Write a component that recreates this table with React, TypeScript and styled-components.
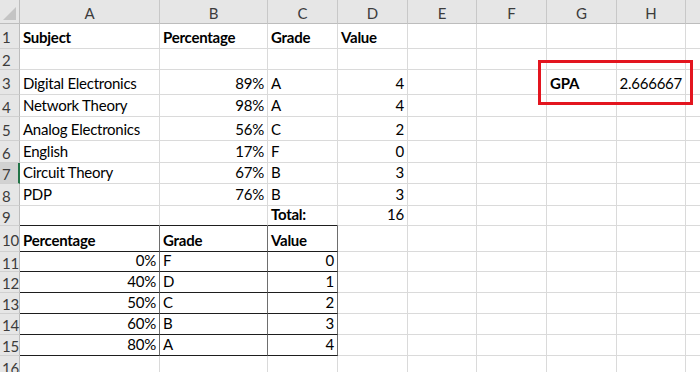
import React from 'react';
import styled, { createGlobalStyle } from 'styled-components';

const GlobalStyle = createGlobalStyle`
  html, body {
    margin: 0;
    padding: 0;
    background: #ffffff;
  }
  body {
    font-family: Lato, "Liberation Sans", sans-serif;
    overflow: hidden;
  }
`;

const COLS = ['A', 'B', 'C', 'D', 'E', 'F', 'G', 'H', 'I'];
const COL_WIDTHS = [140, 108, 70, 70, 69, 70, 70, 69, 90];
const ROW_HEIGHTS = [25, 21, 25, 22, 24, 22, 21, 22, 20, 26, 20, 21, 21, 21, 21, 22];
const ACTIVE_ROW = 7;

type CellData = { v: string; bold?: boolean; right?: boolean };

const b = (v: string): CellData => ({ v, bold: true });
const l = (v: string): CellData => ({ v });
const r = (v: string): CellData => ({ v, right: true });

const DATA: Record<string, CellData> = {
  A1: b('Subject'), B1: b('Percentage'), C1: b('Grade'), D1: b('Value'),
  A3: l('Digital Electronics'), B3: r('89%'), C3: l('A'), D3: r('4'),
  A4: l('Network Theory'), B4: r('98%'), C4: l('A'), D4: r('4'),
  A5: l('Analog Electronics'), B5: r('56%'), C5: l('C'), D5: r('2'),
  A6: l('English'), B6: r('17%'), C6: l('F'), D6: r('0'),
  A7: l('Circuit Theory'), B7: r('67%'), C7: l('B'), D7: r('3'),
  A8: l('PDP'), B8: r('76%'), C8: l('B'), D8: r('3'),
  C9: b('Total:'), D9: r('16'),
  A10: b('Percentage'), B10: b('Grade'), C10: b('Value'),
  A11: r('0%'), B11: l('F'), C11: r('0'),
  A12: r('40%'), B12: l('D'), C12: r('1'),
  A13: r('50%'), B13: l('C'), C13: r('2'),
  A14: r('60%'), B14: l('B'), C14: r('3'),
  A15: r('80%'), B15: l('A'), C15: r('4'),
  G3: b('GPA'), H3: r('2.666667'),
};

const Sheet = styled.div`
  position: relative;
  display: grid;
  grid-template-columns: 20px ${COL_WIDTHS.map((w) => `${w}px`).join(' ')};
  grid-template-rows: 24px ${ROW_HEIGHTS.map((h) => `${h}px`).join(' ')};
  width: 700px;
  height: 372px;
  overflow: hidden;
`;

const Corner = styled.div`
  position: relative;
  background: #e6e6e6;
  border-right: 1px solid #bdbdbd;
  border-bottom: 1px solid #bdbdbd;
  &::after {
    content: '';
    position: absolute;
    right: 3px;
    bottom: 3px;
    border-style: solid;
    border-width: 0 0 13px 13px;
    border-color: transparent transparent #c4c4c4 transparent;
  }
`;

const ColHead = styled.div`
  display: flex;
  align-items: center;
  justify-content: center;
  background: #e6e6e6;
  border-right: 1px solid #c8c8c8;
  border-bottom: 1px solid #bdbdbd;
  color: #3c3c3c;
  font-size: 15px;
  padding-top: 2px;
`;

const RowHead = styled.div<{ $active?: boolean }>`
  display: flex;
  align-items: center;
  justify-content: flex-start;
  padding: 2px 0 0 2px;
  background: ${(p) => (p.$active ? '#d2d2d2' : '#e6e6e6')};
  border-right: ${(p) => (p.$active ? '2px solid #217346' : '1px solid #bdbdbd')};
  border-bottom: 1px solid #d0d0d0;
  color: #3c3c3c;
  font-size: 15px;
  letter-spacing: -0.3px;
`;

const Cell = styled.div<{ $bold?: boolean; $right?: boolean; $edgeR?: boolean; $edgeB?: boolean }>`
  display: flex;
  align-items: flex-end;
  justify-content: ${(p) => (p.$right ? 'flex-end' : 'flex-start')};
  padding: 0 3px 2px 3px;
  border-right: 1px solid ${(p) => (p.$edgeR ? '#6e6e6e' : '#dadada')};
  border-bottom: 1px solid ${(p) => (p.$edgeB ? '#1e1e1e' : '#dadada')};
  color: #000;
  font-size: 15px;
  letter-spacing: -0.25px;
  font-weight: ${(p) => (p.$bold ? 700 : 400)};
  white-space: nowrap;
  min-width: 0;
`;

const Callout = styled.div`
  position: absolute;
  left: 538px;
  top: 60px;
  width: 155px;
  height: 45px;
  box-sizing: border-box;
  border: 3px solid #e3151f;
  pointer-events: none;
`;

export default function App() {
  return (
    <>
      <GlobalStyle />
      <Sheet>
        <Corner />
        {COLS.map((c) => (
          <ColHead key={c}>{c}</ColHead>
        ))}
        {ROW_HEIGHTS.map((_, i) => {
          const row = i + 1;
          return (
            <React.Fragment key={row}>
              <RowHead $active={row === ACTIVE_ROW}>{row}</RowHead>
              {COLS.map((c, ci) => {
                const d = DATA[`${c}${row}`];
                const inTable = ci < 3 && row >= 10 && row <= 15;
                return (
                  <Cell
                    key={c}
                    $bold={d?.bold}
                    $right={d?.right}
                    $edgeR={inTable}
                    $edgeB={ci < 3 && row >= 9 && row <= 15}
                  >
                    {d?.v}
                  </Cell>
                );
              })}
            </React.Fragment>
          );
        })}
        <Callout />
      </Sheet>
    </>
  );
}
